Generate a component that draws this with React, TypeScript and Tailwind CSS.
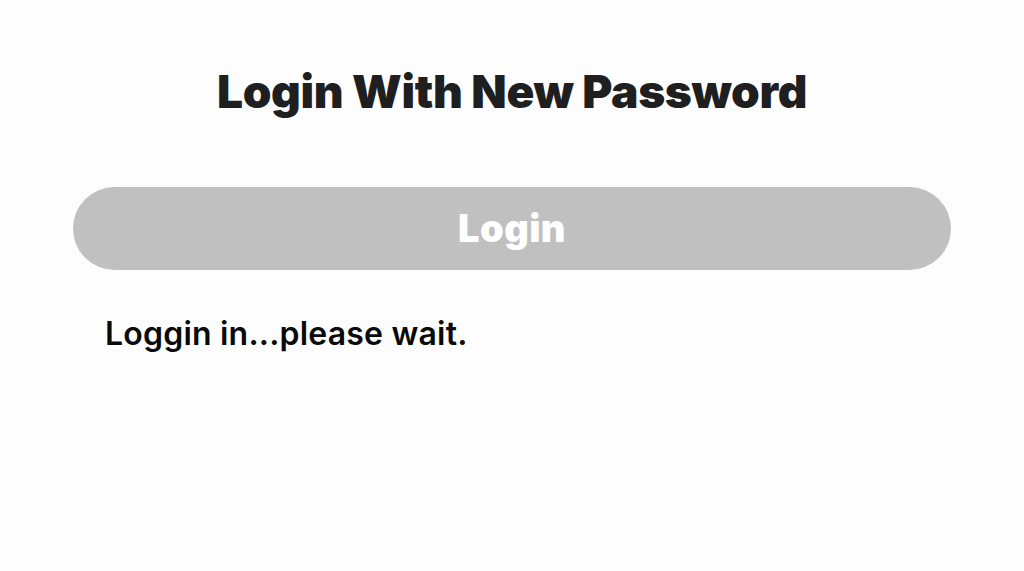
export default function App() {
  return (
    <div className="min-h-[571px] w-full bg-[#fdfdfd] font-['Inter',sans-serif]">
      <div className="flex flex-col pt-[63px] px-[73px]">
        <h1 className="text-center text-[46px] leading-[56px] font-black tracking-[-0.35px] text-[#1f1f1f]">
          Login With New Password
        </h1>
        <button className="mt-[68px] h-[83px] w-full rounded-full bg-[#c0c0c0] text-[38px] font-black tracking-[0.4px] text-white">
          Login
        </button>
        <p className="mt-[44px] pl-[32px] text-[32px] leading-[40px] font-semibold tracking-[0.2px] text-[#0a0a0a]">
          Loggin in...please wait.
        </p>
      </div>
    </div>
  );
}
